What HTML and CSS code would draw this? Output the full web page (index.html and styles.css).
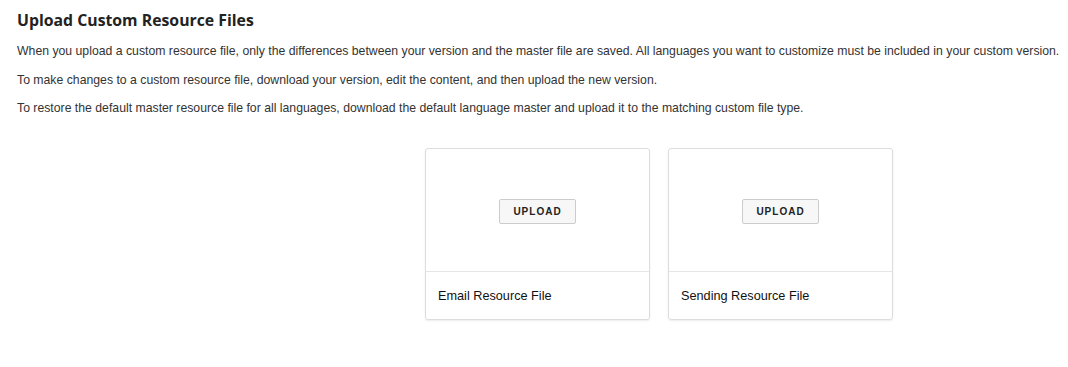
FILE: index.html
```html
<!DOCTYPE html>
<html lang="en">
<head>
    <meta charset="UTF-8">
    <meta name="viewport" content="width=device-width, initial-scale=1.0">
    <title>Upload Custom Resource Files</title>
    <link rel="stylesheet" href="styles.css">
</head>
<body>
    <div class="page">
        <h1>Upload Custom Resource Files</h1>

        <p>When you upload a custom resource file, only the differences between your version and the master file are saved. All languages you want to customize must be included in your custom version.</p>
        <p>To make changes to a custom resource file, download your version, edit the content, and then upload the new version.</p>
        <p>To restore the default master resource file for all languages, download the default language master and upload it to the matching custom file type.</p>

        <div class="cards">
            <div class="card">
                <div class="card-body">
                    <button class="button">UPLOAD</button>
                </div>
                <div class="card-footer">Email Resource File</div>
            </div>
            <div class="card">
                <div class="card-body">
                    <button class="button">UPLOAD</button>
                </div>
                <div class="card-footer">Sending Resource File</div>
            </div>
        </div>
    </div>
</body>
</html>
```

FILE: styles.css
```css
body {
    margin: 0;
    padding: 0;
    background: #fff;
    font-family: 'Liberation Sans', Arial, sans-serif;
    color: #333;
}

.page {
    padding: 9px 2px 9px 17px;
}

h1 {
    font-family: 'Open Sans', sans-serif;
    font-size: 15.8px;
    font-weight: 700;
    color: #222;
    margin: 0 0 13px 0;
}

p {
    font-size: 12.25px;
    line-height: 14px;
    margin: 0 0 14.5px 0;
}

.cards {
    display: flex;
    gap: 18px;
    margin-top: 33px;
    padding-left: 408px;
}

.card {
    width: 223px;
    height: 170px;
    border: 1px solid #ddd;
    border-radius: 3px;
    box-shadow: 0 1px 2px rgba(0, 0, 0, 0.08);
    display: flex;
    flex-direction: column;
}

.card-body {
    height: 122px;
    border-bottom: 1px solid #e6e6e6;
    display: flex;
    justify-content: center;
    align-items: center;
}

.card-footer {
    flex: 1;
    display: flex;
    align-items: center;
    padding: 0 12px;
    font-size: 12.7px;
    color: #111;
}

.button {
    background: #f7f7f7;
    border: 1px solid #ccc;
    border-radius: 2px;
    width: 77px;
    height: 25px;
    margin-top: 3px;
    font-family: 'Liberation Sans', Arial, sans-serif;
    font-size: 10px;
    font-weight: 700;
    letter-spacing: 1px;
    color: #222;
    cursor: pointer;
}
```
